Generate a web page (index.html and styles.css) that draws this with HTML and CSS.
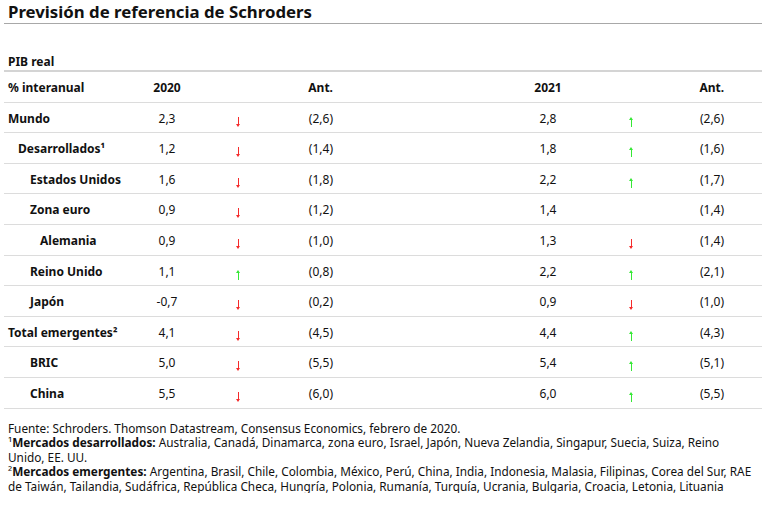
FILE: index.html
```html
<!DOCTYPE html>
<html lang="es">
<head>
<meta charset="utf-8">
<title>Previsión de referencia de Schroders</title>
<link rel="stylesheet" href="styles.css">
</head>
<body>
<div class="page">
  <h1 class="title">Previsión de referencia de Schroders</h1>
  <table class="forecast">
    <colgroup>
      <col class="c-label"><col class="c-year"><col class="c-arrow"><col class="c-ant"><col class="c-year2"><col class="c-arrow2"><col class="c-ant2">
    </colgroup>
    <tr class="caption-row"><td colspan="7">PIB real</td></tr>
    <tr class="head-row">
      <th class="label">% interanual</th>
      <th class="year">2020</th>
      <th></th>
      <th class="ant">Ant.</th>
      <th class="year2">2021</th>
      <th></th>
      <th class="ant2">Ant.</th>
    </tr>
    <tr>
      <td class="label">Mundo</td><td class="year">2,3</td><td class="arrow"><span class="ar down"></span></td><td class="ant">(2,6)</td>
      <td class="year2">2,8</td><td class="arrow"><span class="ar up"></span></td><td class="ant2">(2,6)</td>
    </tr>
    <tr>
      <td class="label ind1">Desarrollados¹</td><td class="year">1,2</td><td class="arrow"><span class="ar down"></span></td><td class="ant">(1,4)</td>
      <td class="year2">1,8</td><td class="arrow"><span class="ar up"></span></td><td class="ant2">(1,6)</td>
    </tr>
    <tr>
      <td class="label ind2">Estados Unidos</td><td class="year">1,6</td><td class="arrow"><span class="ar down"></span></td><td class="ant">(1,8)</td>
      <td class="year2">2,2</td><td class="arrow"><span class="ar up"></span></td><td class="ant2">(1,7)</td>
    </tr>
    <tr>
      <td class="label ind2">Zona euro</td><td class="year">0,9</td><td class="arrow"><span class="ar down"></span></td><td class="ant">(1,2)</td>
      <td class="year2">1,4</td><td class="arrow"></td><td class="ant2">(1,4)</td>
    </tr>
    <tr>
      <td class="label ind3">Alemania</td><td class="year">0,9</td><td class="arrow"><span class="ar down"></span></td><td class="ant">(1,0)</td>
      <td class="year2">1,3</td><td class="arrow"><span class="ar down"></span></td><td class="ant2">(1,4)</td>
    </tr>
    <tr>
      <td class="label ind2">Reino Unido</td><td class="year">1,1</td><td class="arrow"><span class="ar up"></span></td><td class="ant">(0,8)</td>
      <td class="year2">2,2</td><td class="arrow"><span class="ar up"></span></td><td class="ant2">(2,1)</td>
    </tr>
    <tr>
      <td class="label ind2">Japón</td><td class="year">-0,7</td><td class="arrow"><span class="ar down"></span></td><td class="ant">(0,2)</td>
      <td class="year2">0,9</td><td class="arrow"><span class="ar down"></span></td><td class="ant2">(1,0)</td>
    </tr>
    <tr>
      <td class="label">Total emergentes²</td><td class="year">4,1</td><td class="arrow"><span class="ar down"></span></td><td class="ant">(4,5)</td>
      <td class="year2">4,4</td><td class="arrow"><span class="ar up"></span></td><td class="ant2">(4,3)</td>
    </tr>
    <tr>
      <td class="label ind2">BRIC</td><td class="year">5,0</td><td class="arrow"><span class="ar down"></span></td><td class="ant">(5,5)</td>
      <td class="year2">5,4</td><td class="arrow"><span class="ar up"></span></td><td class="ant2">(5,1)</td>
    </tr>
    <tr>
      <td class="label ind2">China</td><td class="year">5,5</td><td class="arrow"><span class="ar down"></span></td><td class="ant">(6,0)</td>
      <td class="year2">6,0</td><td class="arrow"><span class="ar up"></span></td><td class="ant2">(5,5)</td>
    </tr>
  </table>
  <div class="notes">
    <p>Fuente: Schroders. Thomson Datastream, Consensus Economics, febrero de 2020.</p>
    <p>¹<b>Mercados desarrollados:</b> Australia, Canadá, Dinamarca, zona euro, Israel, Japón, Nueva Zelandia, Singapur, Suecia, Suiza, Reino Unido, EE. UU.</p>
    <p>²<b>Mercados emergentes:</b> Argentina, Brasil, Chile, Colombia, México, Perú, China, India, Indonesia, Malasia, Filipinas, Corea del Sur, RAE de Taiwán, Tailandia, Sudáfrica, República Checa, Hungría, Polonia, Rumanía, Turquía, Ucrania, Bulgaria, Croacia, Letonia, Lituania</p>
  </div>
</div>
</body>
</html>
```

FILE: styles.css
```css
html, body {
  margin: 0;
  padding: 0;
  background: #fff;
}
body {
  font-family: "Noto Sans", "Open Sans", sans-serif;
  color: #111;
}
.page {
  width: 758px;
  margin-left: 4px;
}
.title {
  margin: 0;
  padding: 2px 0 1px 4px;
  font-size: 16.8px;
  line-height: 20px;
  font-weight: 700;
  border-bottom: 1px solid #a8a8a8;
}
.forecast {
  width: 758px;
  table-layout: fixed;
  border-collapse: collapse;
  font-size: 12px;
  line-height: 16px;
}
.c-label { width: 123px; }
.c-year { width: 80px; }
.c-arrow { width: 62px; }
.c-ant { width: 71px; }
.c-year2 { width: 247px; }
.c-arrow2 { width: 88px; }
.c-ant2 { width: 87px; }

.forecast td, .forecast th {
  height: 16px;
  padding: 8px 0 5.6px 0;
  border-bottom: 1px solid #dcdcdc;
  font-weight: 400;
  white-space: nowrap;
  vertical-align: top;
}
.forecast th { font-weight: 700; }
.caption-row td {
  padding: 30px 0 0 4px;
  font-weight: 700;
  border-bottom: 2px solid #d4d4d4;
  vertical-align: bottom;
}
.forecast .label {
  text-align: left;
  padding-left: 4px;
  font-weight: 700;
}
.forecast .ind1 { padding-left: 14px; }
.forecast .ind2 { padding-left: 26px; }
.forecast .ind3 { padding-left: 36px; }
.forecast .year { text-align: center; }
.forecast .ant { text-align: right; padding-right: 7px; }
.forecast .year2 { text-align: center; padding-left: 169px; }
.forecast .arrow { text-align: center; }
.forecast .ant2 { text-align: right; padding-right: 38px; }

.ar {
  display: inline-block;
  vertical-align: top;
  width: 5px;
  height: 10px;
  margin-top: 6px;
  margin-bottom: -6px;
  position: relative;
}
.ar::before {
  content: "";
  position: absolute;
  left: 2px;
  width: 1px;
}
.ar::after {
  content: "";
  position: absolute;
  left: 0.5px;
  width: 0;
  height: 0;
  border-left: 2px solid transparent;
  border-right: 2px solid transparent;
}
.ar.down::before { background: #f52a2a; top: 0; bottom: 2px; }
.ar.down::after { bottom: 0; border-top: 3.5px solid #f52a2a; }
.ar.up::before { background: #35e835; top: 2px; bottom: 0; }
.ar.up::after { top: 0; border-bottom: 3.5px solid #35e835; }

.notes {
  margin-top: 12px;
  padding: 0 8px 0 4px;
  font-size: 11.8px;
  line-height: 14.5px;
}
.notes p { margin: 0; }
.notes b { font-weight: 700; }
```
